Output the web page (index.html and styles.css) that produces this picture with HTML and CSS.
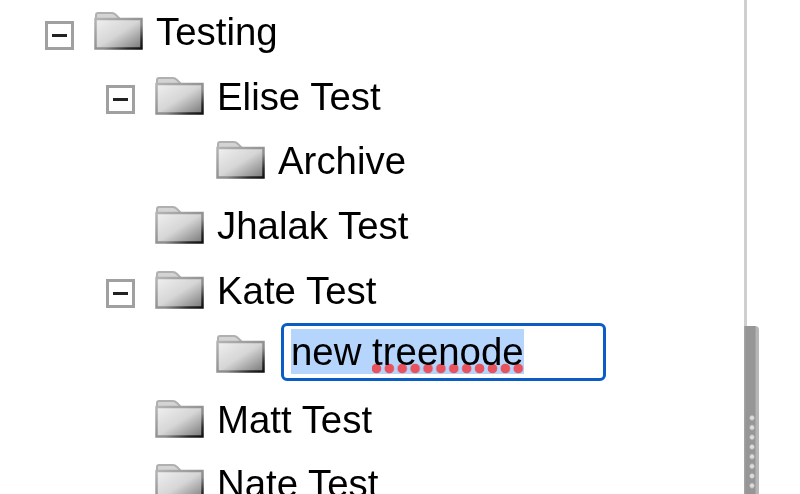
FILE: index.html
```html
<!DOCTYPE html>
<html lang="en">

<head>
    <meta charset="UTF-8">
    <title>Tree</title>
    <link rel="stylesheet" href="styles.css">
</head>

<body>
    <svg class="defs" width="0" height="0">
        <defs>
            <linearGradient id="folderFill" x1="0" y1="0" x2="1" y2="1">
                <stop offset="0" stop-color="#f0f0f0" />
                <stop offset="0.5" stop-color="#d6d6d6" />
                <stop offset="1" stop-color="#777" />
            </linearGradient>
            <linearGradient id="folderEdge" x1="0" y1="0" x2="1" y2="1">
                <stop offset="0" stop-color="#b4b4b4" />
                <stop offset="0.6" stop-color="#8c8c8c" />
                <stop offset="0.85" stop-color="#2a2a2a" />
                <stop offset="1" stop-color="#111" />
            </linearGradient>
            <symbol id="folder" viewBox="0 0 49 39">
                <path d="M2 9V4Q2 2 4 2H18Q20 2 22 4L26 8H2Z" fill="#d4d4d4" stroke="#b0b0b0" stroke-width="2" />
                <path d="M1.5 8H47.5V37.5H1.5Z" fill="url(#folderFill)" stroke="url(#folderEdge)" stroke-width="2.5" />
            </symbol>
        </defs>
    </svg>

    <div class="pane">
        <ul class="tree">
            <li class="row level-0">
                <span class="toggle"><span class="minus"></span></span>
                <svg class="folder"><use href="#folder" /></svg>
                <span class="label">Testing</span>
            </li>
            <li class="row level-1">
                <span class="toggle"><span class="minus"></span></span>
                <svg class="folder"><use href="#folder" /></svg>
                <span class="label">Elise Test</span>
            </li>
            <li class="row level-2">
                <span class="toggle empty"></span>
                <svg class="folder"><use href="#folder" /></svg>
                <span class="label">Archive</span>
            </li>
            <li class="row level-1">
                <span class="toggle empty"></span>
                <svg class="folder"><use href="#folder" /></svg>
                <span class="label">Jhalak Test</span>
            </li>
            <li class="row level-1">
                <span class="toggle"><span class="minus"></span></span>
                <svg class="folder"><use href="#folder" /></svg>
                <span class="label">Kate Test</span>
            </li>
            <li class="row level-2">
                <span class="toggle empty"></span>
                <svg class="folder editing"><use href="#folder" /></svg>
                <div class="edit-box"><span class="selected">new <span class="misspelt">treenode</span></span></div>
            </li>
            <li class="row level-1">
                <span class="toggle empty"></span>
                <svg class="folder"><use href="#folder" /></svg>
                <span class="label">Matt Test</span>
            </li>
            <li class="row level-1">
                <span class="toggle empty"></span>
                <svg class="folder"><use href="#folder" /></svg>
                <span class="label">Nate Test</span>
            </li>
        </ul>
    </div>

    <div class="scroll-thumb">
        <div class="grip"></div>
    </div>
</body>

</html>
```

FILE: styles.css
```css
html,
body {
    height: 100%;
}

body {
    margin: 0;
    background-color: #fff;
    color: #000;
    font-family: "Liberation Sans", Arial, sans-serif;
    overflow: hidden;
}

.defs {
    position: absolute;
}

.pane {
    box-sizing: border-box;
    width: 747px;
    height: 494px;
    border-right: 3px solid #cfcfcf;
    overflow: hidden;
}

.tree {
    list-style: none;
    margin: 0;
    padding: 0;
    filter: blur(0.5px);
}

.row {
    display: flex;
    align-items: center;
    height: 64.6px;
    font-size: 38.4px;
}

.level-0 {
    padding-left: 45px;
}

.level-1 {
    padding-left: 106px;
}

.level-2 {
    padding-left: 167px;
}

.toggle {
    box-sizing: border-box;
    display: flex;
    align-items: center;
    justify-content: center;
    flex: none;
    width: 29px;
    height: 29px;
    margin-top: 6px;
    margin-right: 20px;
    border: 3px solid #a0a0a0;
    filter: blur(0.4px);
}

.toggle.empty {
    visibility: hidden;
}

.minus {
    width: 15px;
    height: 3px;
    background-color: #222;
}

.folder {
    flex: none;
    width: 49px;
    height: 39px;
    margin-top: -3px;
    margin-right: 13px;
    filter: blur(0.6px);
}

.folder.editing {
    margin-right: 16px;
}

.label {
    white-space: nowrap;
}

.edit-box {
    box-sizing: border-box;
    width: 325px;
    height: 58px;
    margin-top: -7px;
    padding: 3px 0 0 7px;
    border: 3px solid #0b5cc5;
    border-radius: 6px;
    line-height: 45px;
    white-space: nowrap;
}

.selected {
    display: inline-block;
    height: 45px;
    background-color: #b5d5fd;
}

.misspelt {
    display: inline-block;
    height: 45px;
    background-image: radial-gradient(circle at 50% 50%, #e8525c 4.4px, transparent 5.2px);
    background-position: -2px 100%;
    background-repeat: repeat-x;
    background-size: 12.9px 11px;
}

.scroll-thumb {
    position: absolute;
    top: 326px;
    left: 744px;
    box-sizing: border-box;
    width: 15px;
    height: 168px;
    padding-top: 87px;
    border-top-right-radius: 4px;
    background-image: linear-gradient(to right, #a8a8a8 0, #969696 2px, #969696 11px, #b4b4b4 12px, #b8b8b8 15px);
}

.grip {
    height: 78px;
    background-image: radial-gradient(circle at 8px 50%, #dedede 1.5px, transparent 3px);
    background-size: 15px 9.7px;
    background-repeat: repeat-y;
}
```
